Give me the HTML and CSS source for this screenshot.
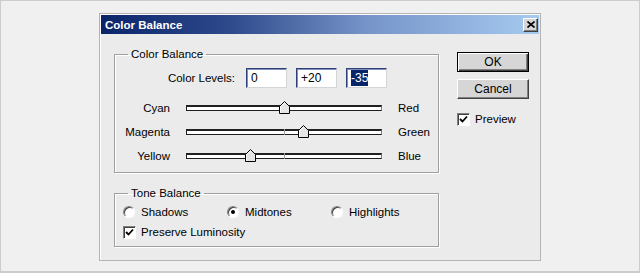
FILE: index.html
```html
<!doctype html>
<html>
	<head>
		<title>Color Balance</title>
		<link rel="stylesheet" href="styles.css">
	</head>
	<body>
		<div class="frame">
			<div class="dialog">
				<div class="titleBar">
					<span class="titleText">Color Balance</span>
					<div class="btnClose">
						<svg width="8" height="7" viewBox="0 0 8 7"><path d="M0.5 0.5 L7.5 6.5 M7.5 0.5 L0.5 6.5" stroke="#000" stroke-width="1.6" fill="none"/></svg>
					</div>
				</div>
				<div class="dialogBody">
					<div class="leftCol">
						<fieldset class="group groupColor">
							<legend>Color Balance</legend>
							<div class="levelsRow">
								<span class="levelsLabel">Color Levels:</span>
								<div class="levelBox">0</div>
								<div class="levelBox">+20</div>
								<div class="levelBox"><span class="selText">-35</span></div>
							</div>
							<div class="sliderGrid">
								<span class="sliderLeft">Cyan</span>
								<div class="sliderTrack">
									<span class="centerTick"></span>
									<svg class="thumb" style="left: calc(50% - 5.5px);" width="11" height="13" viewBox="0 0 11 13"><polygon points="5.5,0.5 10.5,5.5 10.5,12.5 0.5,12.5 0.5,5.5" fill="#e4e4e4" stroke="#000"/><polyline points="1.5,12 1.5,6 5.5,2" fill="none" stroke="#fff"/></svg>
								</div>
								<span class="sliderRight">Red</span>

								<span class="sliderLeft">Magenta</span>
								<div class="sliderTrack">
									<span class="centerTick"></span>
									<svg class="thumb" style="left: calc(60% - 5.5px);" width="11" height="13" viewBox="0 0 11 13"><polygon points="5.5,0.5 10.5,5.5 10.5,12.5 0.5,12.5 0.5,5.5" fill="#e4e4e4" stroke="#000"/><polyline points="1.5,12 1.5,6 5.5,2" fill="none" stroke="#fff"/></svg>
								</div>
								<span class="sliderRight">Green</span>

								<span class="sliderLeft">Yellow</span>
								<div class="sliderTrack">
									<span class="centerTick"></span>
									<svg class="thumb" style="left: calc(32.5% - 5.5px);" width="11" height="13" viewBox="0 0 11 13"><polygon points="5.5,0.5 10.5,5.5 10.5,12.5 0.5,12.5 0.5,5.5" fill="#e4e4e4" stroke="#000"/><polyline points="1.5,12 1.5,6 5.5,2" fill="none" stroke="#fff"/></svg>
								</div>
								<span class="sliderRight">Blue</span>
							</div>
						</fieldset>

						<fieldset class="group groupTone">
							<legend>Tone Balance</legend>
							<div class="radioRow">
								<div class="option"><span class="radio"></span>Shadows</div>
								<div class="option"><span class="radio radioOn"></span>Midtones</div>
								<div class="option"><span class="radio"></span>Highlights</div>
							</div>
							<div class="checkRow">
								<span class="checkBox">
									<svg width="9" height="9" viewBox="0 0 9 9"><polyline points="1,4 3.5,6.5 8,1.5" fill="none" stroke="#000" stroke-width="1.8"/></svg>
								</span>
								Preserve Luminosity
							</div>
						</fieldset>
					</div>

					<div class="rightCol">
						<div class="btn btnDefault">OK</div>
						<div class="btn btnCancel">Cancel</div>
						<div class="checkRow previewRow">
							<span class="checkBox">
								<svg width="9" height="9" viewBox="0 0 9 9"><polyline points="1,4 3.5,6.5 8,1.5" fill="none" stroke="#000" stroke-width="1.8"/></svg>
							</span>
							Preview
						</div>
					</div>
				</div>
			</div>
		</div>
	</body>
</html>
```

FILE: styles.css
```css
body {
	margin: 0;
	background: #f0f0f0;
	font-family: "Liberation Sans", Arial, sans-serif;
	font-size: 11.5px;
	color: #000;
}

.frame {
	width: 640px;
	height: 273px;
	box-sizing: border-box;
	border: 1px solid #cccccc;
	border-bottom-width: 2px;
	padding: 12px 0 0 98px;
	background: #f0f0f0;
}

.dialog {
	width: 442px;
	height: 248px;
	box-sizing: border-box;
	border: 1px solid #b4b4b4;
	box-shadow: inset 1px 1px 0 #ffffff;
	padding: 1px;
	background: #ebebeb;
}

.titleBar {
	height: 19px;
	display: flex;
	align-items: center;
	justify-content: space-between;
	padding: 0 1px 0 4px;
	background: linear-gradient(to right, #0a246a 0%, #2f4b8c 30%, #7593c8 60%, #a6caf0 100%);
}

.titleText {
	color: #ffffff;
	font-weight: bold;
	font-size: 11.5px;
}

.btnClose {
	width: 15px;
	height: 14px;
	box-sizing: border-box;
	display: flex;
	align-items: center;
	justify-content: center;
	background: #d6d6d6;
	border: 1px solid;
	border-color: #ffffff #404040 #404040 #ffffff;
	box-shadow: inset -1px -1px 0 #808080;
}

.dialogBody {
	display: flex;
	gap: 18px;
	padding: 13px 10px 0 13px;
}

.leftCol {
	width: 325px;
	display: flex;
	flex-direction: column;
	gap: 13px;
}

.group {
	margin: 0;
	padding: 0 0 4px 0;
	border: 1px solid #a0a0a0;
	box-shadow: inset 1px 1px 0 #ffffff, 1px 1px 0 #ffffff;
	min-width: 0;
}

.group legend {
	margin-left: 13px;
	padding: 0 3px;
	line-height: 14px;
}

.levelsRow {
	display: flex;
	align-items: center;
	justify-content: flex-end;
	height: 20px;
	margin-top: 7px;
	padding-right: 51px;
	gap: 9px;
}

.levelsLabel {
	margin-right: 2px;
}

.levelBox {
	width: 41px;
	height: 20px;
	box-sizing: border-box;
	border: 1px solid;
	border-color: #2f3f78 #d4d4d4 #d4d4d4 #2f3f78;
	box-shadow: inset 1px 1px 0 #8090b8;
	background: #ffffff;
	padding-left: 4px;
	font-size: 12px;
	line-height: 18px;
}

.selText {
	background: #0a246a;
	color: #ffffff;
	padding: 1px 0;
}

.sliderGrid {
	display: grid;
	grid-template-columns: 55px 196px auto;
	grid-auto-rows: 24px;
	column-gap: 16px;
	align-items: center;
	margin-top: 8px;
}

.sliderLeft {
	text-align: right;
}

.sliderTrack {
	position: relative;
	height: 6px;
	box-sizing: border-box;
	border-top: 2px solid #202020;
	border-left: 1px solid #202020;
	border-bottom: 1px solid #202020;
	border-right: 1px solid #808080;
	background: #ffffff;
	margin-top: -1px;
}

.centerTick {
	position: absolute;
	left: 50%;
	top: -2px;
	width: 1px;
	height: 6px;
	background: #9a9a9a;
}

.thumb {
	position: absolute;
	top: -6px;
}

.radioRow {
	display: grid;
	grid-template-columns: repeat(3, 104px);
	height: 20px;
	align-items: center;
	padding-left: 8px;
	margin-top: 2px;
}

.option {
	display: flex;
	align-items: center;
	gap: 6px;
}

.radio {
	position: relative;
	width: 12px;
	height: 12px;
	box-sizing: border-box;
	border-radius: 50%;
	border: 1px solid;
	border-color: #808080 #ffffff #ffffff #808080;
	box-shadow: inset 1px 1px 0 #404040;
	background: #ffffff;
}

.radioOn::after {
	content: "";
	position: absolute;
	left: 3px;
	top: 3px;
	width: 4px;
	height: 4px;
	border-radius: 50%;
	background: #000;
}

.checkRow {
	display: flex;
	align-items: center;
	gap: 5px;
	height: 20px;
	padding-left: 8px;
}

.checkBox {
	width: 13px;
	height: 13px;
	box-sizing: border-box;
	display: flex;
	align-items: center;
	justify-content: center;
	border: 1px solid;
	border-color: #808080 #ffffff #ffffff #808080;
	box-shadow: inset 1px 1px 0 #404040;
	background: #ffffff;
}

.rightCol {
	width: 72px;
	display: flex;
	flex-direction: column;
}

.btn {
	height: 20px;
	box-sizing: border-box;
	display: flex;
	align-items: center;
	justify-content: center;
	background: #d6d6d6;
	font-size: 12px;
	border: 1px solid;
	border-color: #ffffff #404040 #404040 #ffffff;
	box-shadow: inset -1px -1px 0 #808080;
}

.btnDefault {
	margin-top: 5px;
	border-color: #000;
	box-shadow: inset 1px 1px 0 #ffffff, inset -1px -1px 0 #404040, inset -2px -2px 0 #808080;
}

.btnCancel {
	margin-top: 7px;
}

.previewRow {
	margin-top: 10px;
	padding-left: 0;
}
```
